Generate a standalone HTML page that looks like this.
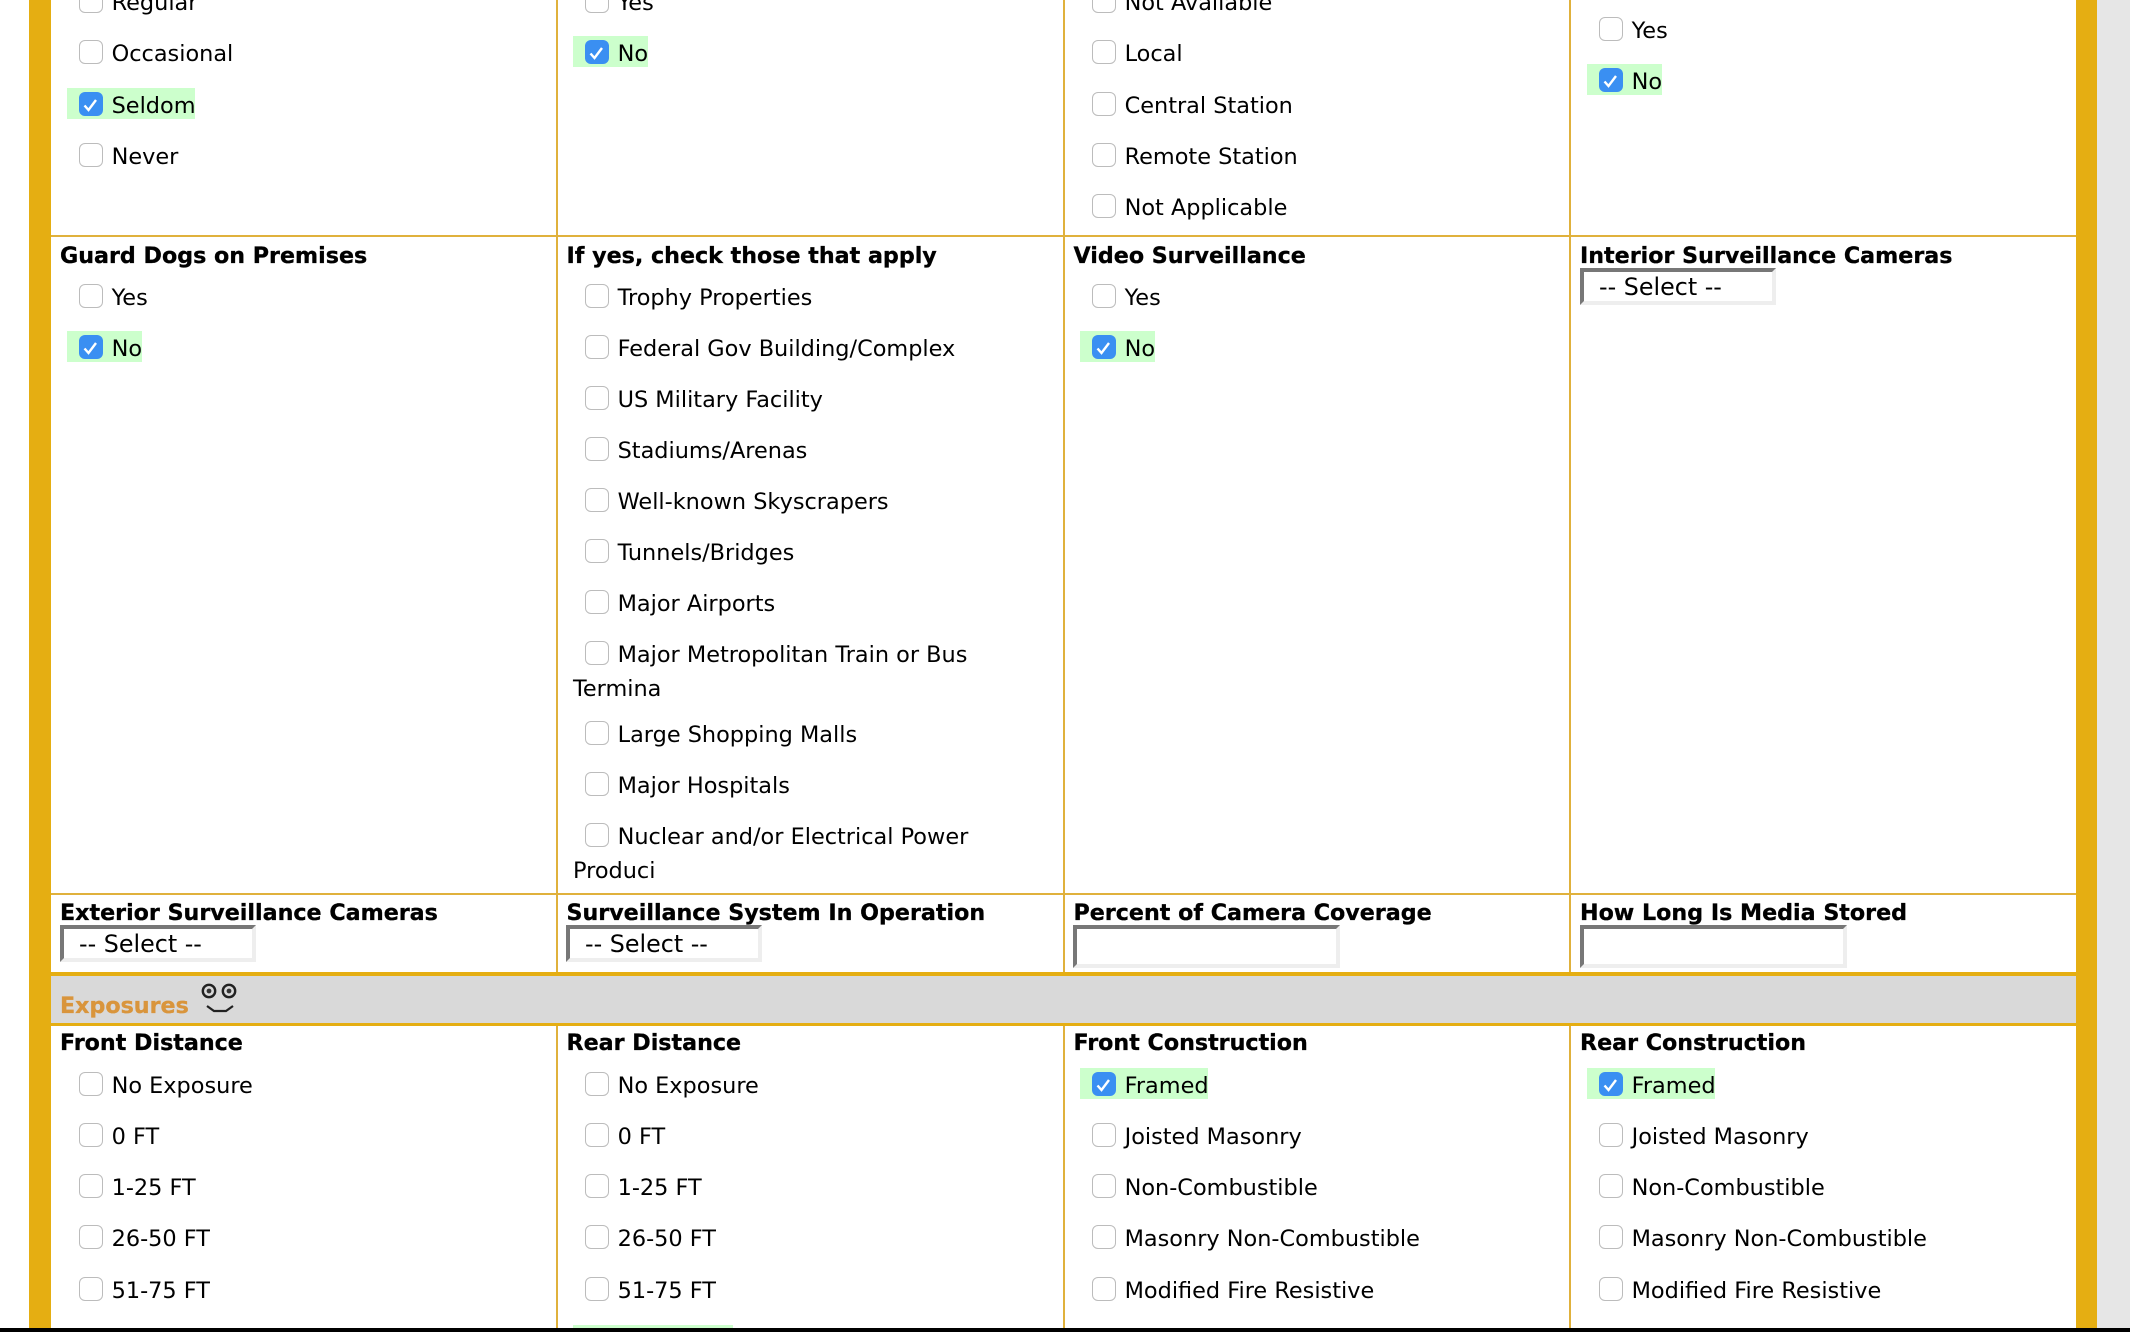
<!DOCTYPE html>
<html><head><meta charset="utf-8"><style>
html,body{margin:0;padding:0;background:#fff}
#p{position:relative;width:2130px;height:1332px;overflow:hidden;background:#fff;font-family:"DejaVu Sans","Liberation Sans",sans-serif;font-size:22.4px;color:#000}
#p div{position:absolute}
.y{background:#e5ae12}
.l{background:#e0b13c}
.h{font-weight:bold;font-size:22.2px;line-height:30px;white-space:nowrap;-webkit-text-stroke:.3px currentColor}
.i{height:31px;box-sizing:border-box;padding:3px 0 0 44.6px;line-height:30px;white-space:nowrap}
.g{background:#ccffcc}
.k{position:absolute;left:12px;top:4px;width:24px;height:24px;box-sizing:border-box;border:1.5px solid #bcbcbc;border-radius:6px;background:#fff}
.g .k{background:#3a8ff2;border:0}
.k svg{position:absolute;left:0;top:0;width:24px;height:24px}
.s{box-sizing:border-box;width:196px;height:37px;border:4px solid;border-color:#777 #eee #eee #777;font-size:23.8px;line-height:31px;padding-left:15px;white-space:nowrap}
.n{box-sizing:border-box;width:267px;height:43px;border:4px solid;border-color:#777 #eee #eee #777}
</style></head><body><div id="p">
<div style="left:2097px;top:0;width:33px;height:1332px;background:#e6e6e6"></div>
<div class="y" style="left:29px;top:0;width:22px;height:1332px"></div>
<div class="y" style="left:2076px;top:0;width:21px;height:1332px"></div>

<div class="l" style="left:556px;top:0;width:2px;height:972px"></div>
<div class="l" style="left:1063px;top:0;width:2px;height:972px"></div>
<div class="l" style="left:1569px;top:0;width:2px;height:972px"></div>
<div class="l" style="left:556px;top:1026px;width:2px;height:302px"></div>
<div class="l" style="left:1063px;top:1026px;width:2px;height:302px"></div>
<div class="l" style="left:1569px;top:1026px;width:2px;height:302px"></div>
<div class="l" style="left:51px;top:235px;width:2025px;height:2px"></div>
<div class="l" style="left:51px;top:893px;width:2025px;height:2px"></div>
<div style="left:51px;top:976px;width:2025px;height:47px;background:#d9d9d9"></div>
<div class="y" style="left:51px;top:972px;width:2025px;height:4px"></div>
<div class="y" style="left:51px;top:1023px;width:2025px;height:3px"></div>

<div class="i" style="left:67px;top:-15px"><span class="k"></span>Regular</div>
<div class="i" style="left:67px;top:36px"><span class="k"></span>Occasional</div>
<div class="i g" style="left:67px;top:88px;width:128px"><span class="k"><svg viewBox="0 0 24 24"><polyline points="5.5,13.5 9.5,18 17,8" fill="none" stroke="#fff" stroke-width="2.4"/></svg></span>Seldom</div>
<div class="i" style="left:67px;top:139px"><span class="k"></span>Never</div>

<div class="i" style="left:573px;top:-15px"><span class="k"></span>Yes</div>
<div class="i g" style="left:573px;top:36px;width:75px"><span class="k"><svg viewBox="0 0 24 24"><polyline points="5.5,13.5 9.5,18 17,8" fill="none" stroke="#fff" stroke-width="2.4"/></svg></span>No</div>

<div class="i" style="left:1080px;top:-15px"><span class="k"></span>Not Available</div>
<div class="i" style="left:1080px;top:36px"><span class="k"></span>Local</div>
<div class="i" style="left:1080px;top:88px"><span class="k"></span>Central Station</div>
<div class="i" style="left:1080px;top:139px"><span class="k"></span>Remote Station</div>
<div class="i" style="left:1080px;top:190px"><span class="k"></span>Not Applicable</div>

<div class="i" style="left:1587px;top:13px"><span class="k"></span>Yes</div>
<div class="i g" style="left:1587px;top:64px;width:75px"><span class="k"><svg viewBox="0 0 24 24"><polyline points="5.5,13.5 9.5,18 17,8" fill="none" stroke="#fff" stroke-width="2.4"/></svg></span>No</div>

<div class="h" style="left:60px;top:241px">Guard Dogs on Premises</div>
<div class="h" style="left:566.5px;top:241px">If yes, check those that apply</div>
<div class="h" style="left:1073.5px;top:241px">Video Surveillance</div>
<div class="h" style="left:1580px;top:241px">Interior Surveillance Cameras</div>

<div class="i" style="left:67px;top:280px"><span class="k"></span>Yes</div>
<div class="i g" style="left:67px;top:331px;width:75px"><span class="k"><svg viewBox="0 0 24 24"><polyline points="5.5,13.5 9.5,18 17,8" fill="none" stroke="#fff" stroke-width="2.4"/></svg></span>No</div>

<div class="i" style="left:573px;top:280px"><span class="k"></span>Trophy Properties</div>
<div class="i" style="left:573px;top:331px"><span class="k"></span>Federal Gov Building/Complex</div>
<div class="i" style="left:573px;top:382px"><span class="k"></span>US Military Facility</div>
<div class="i" style="left:573px;top:433px"><span class="k"></span>Stadiums/Arenas</div>
<div class="i" style="left:573px;top:484px"><span class="k"></span>Well-known Skyscrapers</div>
<div class="i" style="left:573px;top:535px"><span class="k"></span>Tunnels/Bridges</div>
<div class="i" style="left:573px;top:586px"><span class="k"></span>Major Airports</div>
<div class="i" style="left:573px;top:637px"><span class="k"></span>Major Metropolitan Train or Bus</div>
<div class="i" style="left:573px;top:671px;padding-left:0">Termina</div>
<div class="i" style="left:573px;top:717px"><span class="k"></span>Large Shopping Malls</div>
<div class="i" style="left:573px;top:768px"><span class="k"></span>Major Hospitals</div>
<div class="i" style="left:573px;top:819px"><span class="k"></span>Nuclear and/or Electrical Power</div>
<div class="i" style="left:573px;top:853px;padding-left:0">Produci</div>

<div class="i" style="left:1080px;top:280px"><span class="k"></span>Yes</div>
<div class="i g" style="left:1080px;top:331px;width:75px"><span class="k"><svg viewBox="0 0 24 24"><polyline points="5.5,13.5 9.5,18 17,8" fill="none" stroke="#fff" stroke-width="2.4"/></svg></span>No</div>

<div class="s" style="left:1580px;top:268px">-- Select --</div>

<div class="h" style="left:60px;top:898px">Exterior Surveillance Cameras</div>
<div class="h" style="left:566.5px;top:898px">Surveillance System In Operation</div>
<div class="h" style="left:1073.5px;top:898px">Percent of Camera Coverage</div>
<div class="h" style="left:1580px;top:898px">How Long Is Media Stored</div>

<div class="s" style="left:60px;top:925px">-- Select --</div>
<div class="s" style="left:566px;top:925px">-- Select --</div>
<div class="n" style="left:1073px;top:925px"></div>
<div class="n" style="left:1580px;top:925px"></div>

<div class="h" style="left:60px;top:991px;color:#d9953c">Exposures</div>
<svg style="position:absolute;left:195px;top:978px" width="50" height="40" viewBox="0 0 50 40">
<circle cx="14" cy="13" r="6.2" fill="none" stroke="#222" stroke-width="2.4"/><circle cx="14" cy="13" r="2.4" fill="#333"/>
<circle cx="34" cy="13" r="6.2" fill="none" stroke="#222" stroke-width="2.4"/><circle cx="34" cy="13" r="2.4" fill="#333"/>
<polyline points="12,28 19,33 31,33 38,28" fill="none" stroke="#222" stroke-width="2.2"/>
</svg>

<div class="h" style="left:60px;top:1028px">Front Distance</div>
<div class="h" style="left:566.5px;top:1028px">Rear Distance</div>
<div class="h" style="left:1073.5px;top:1028px">Front Construction</div>
<div class="h" style="left:1580px;top:1028px">Rear Construction</div>

<div class="i" style="left:67px;top:1068px"><span class="k"></span>No Exposure</div>
<div class="i" style="left:67px;top:1119px"><span class="k"></span>0 FT</div>
<div class="i" style="left:67px;top:1170px"><span class="k"></span>1-25 FT</div>
<div class="i" style="left:67px;top:1221px"><span class="k"></span>26-50 FT</div>
<div class="i" style="left:67px;top:1273px"><span class="k"></span>51-75 FT</div>

<div class="i" style="left:573px;top:1068px"><span class="k"></span>No Exposure</div>
<div class="i" style="left:573px;top:1119px"><span class="k"></span>0 FT</div>
<div class="i" style="left:573px;top:1170px"><span class="k"></span>1-25 FT</div>
<div class="i" style="left:573px;top:1221px"><span class="k"></span>26-50 FT</div>
<div class="i" style="left:573px;top:1273px"><span class="k"></span>51-75 FT</div>
<div class="g" style="left:573px;top:1325px;width:160px;height:3px"></div>

<div class="i g" style="left:1080px;top:1068px;width:128px"><span class="k"><svg viewBox="0 0 24 24"><polyline points="5.5,13.5 9.5,18 17,8" fill="none" stroke="#fff" stroke-width="2.4"/></svg></span>Framed</div>
<div class="i" style="left:1080px;top:1119px"><span class="k"></span>Joisted Masonry</div>
<div class="i" style="left:1080px;top:1170px"><span class="k"></span>Non-Combustible</div>
<div class="i" style="left:1080px;top:1221px"><span class="k"></span>Masonry Non-Combustible</div>
<div class="i" style="left:1080px;top:1273px"><span class="k"></span>Modified Fire Resistive</div>

<div class="i g" style="left:1587px;top:1068px;width:128px"><span class="k"><svg viewBox="0 0 24 24"><polyline points="5.5,13.5 9.5,18 17,8" fill="none" stroke="#fff" stroke-width="2.4"/></svg></span>Framed</div>
<div class="i" style="left:1587px;top:1119px"><span class="k"></span>Joisted Masonry</div>
<div class="i" style="left:1587px;top:1170px"><span class="k"></span>Non-Combustible</div>
<div class="i" style="left:1587px;top:1221px"><span class="k"></span>Masonry Non-Combustible</div>
<div class="i" style="left:1587px;top:1273px"><span class="k"></span>Modified Fire Resistive</div>

<div style="left:0;top:1328px;width:2130px;height:4px;background:#000"></div>
</div></body></html>
